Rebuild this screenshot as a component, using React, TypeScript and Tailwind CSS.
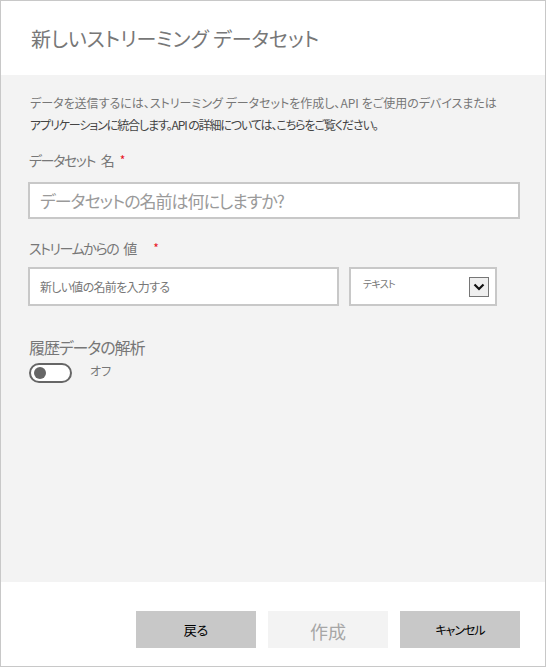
import React from "react";

export default function App() {
  const font = { fontFamily: '"Noto Sans CJK JP", "Noto Sans", sans-serif' };
  return (
    <div
      className="w-[546px] h-[667px] border border-[#c8c8c8] bg-white flex flex-col box-border [font-feature-settings:'palt']"
      style={font}
    >
      <div className="h-[74px] shrink-0 px-[30px] pt-[24px]">
        <h1 className="text-[20px] leading-[28px] text-[#777777] font-normal whitespace-nowrap">
          新しいストリーミング データセット
        </h1>
      </div>
      <div className="flex-1 bg-[#f3f3f3] px-[27px] pt-[17px] flex flex-col">
        <p className="text-[12px] leading-[22px] pl-[2px] whitespace-nowrap">
          <span className="text-[#777777]">
            データを送信するには、ストリーミング データセットを作成し、API をご使用のデバイスまたは
          </span>
          <br />
          <span className="text-[#444444] tracking-[-1.1px]">
            アプリケーションに統合します。API の詳細については、こちらをご覧ください。
          </span>
        </p>
        <div className="mt-[14px] text-[14px] leading-[20px] text-[#777777] pl-[1px] whitespace-nowrap flex items-center">
          <span className="tracking-[-1.4px]">データセット</span>
          <span className="ml-[6px]">名</span>
          <span className="text-[#e81123] text-[12px] ml-[5px]">*</span>
        </div>
        <div className="mt-[12px] h-[37px] w-[492px] bg-white border-2 border-[#c8c8c8] flex items-center px-[10px]">
          <span className="text-[17px] tracking-[-1px] text-[#9a9a9a] leading-none whitespace-nowrap">
            データセットの名前は何にしますか?
          </span>
        </div>
        <div className="mt-[19px] text-[14px] leading-[20px] text-[#777777] pl-[1px] whitespace-nowrap flex items-center">
          <span className="tracking-[-1.4px]">ストリームからの</span>
          <span className="ml-[5px]">値</span>
          <span className="text-[#e81123] text-[12px] ml-[16px]">*</span>
        </div>
        <div className="mt-[9px] flex gap-[10px]">
          <div className="h-[39px] w-[311px] bg-white border-2 border-[#c8c8c8] flex items-center px-[10px]">
            <span className="text-[12px] tracking-[-0.7px] text-[#777777] whitespace-nowrap">新しい値の名前を入力する</span>
          </div>
          <div className="h-[39px] w-[148px] bg-white border-2 border-[#c8c8c8] flex items-center justify-between pl-[12px] pr-[6px]">
            <span className="text-[10px] tracking-[-0.7px] text-[#777777] -mt-[6px] whitespace-nowrap">テキスト</span>
            <div className="w-[20px] h-[20px] border border-[#767676] bg-[#efefef] flex items-center justify-center">
              <svg width="12" height="8" viewBox="0 0 12 8">
                <path d="M1.5 1.5 L6 6 L10.5 1.5" fill="none" stroke="#111" strokeWidth="2.2" />
              </svg>
            </div>
          </div>
        </div>
        <div className="mt-[30px] text-[16px] leading-[22px] text-[#777777] pl-[1px] whitespace-nowrap tracking-[-1.1px]">
          履歴データの解析
        </div>
        <div className="mt-[5px] flex items-center pl-[1px]">
          <div className="w-[43px] h-[20px] rounded-full border-2 border-[#666666] bg-white flex items-center pl-[3px]">
            <div className="w-[12px] h-[12px] rounded-full bg-[#666666]" />
          </div>
          <span className="ml-[18px] text-[12px] text-[#777777] -mt-[4px]">オフ</span>
        </div>
      </div>
      <div className="h-[84px] shrink-0 flex justify-end items-start pt-[29px] pr-[25px] gap-[12px]">
        <button className="w-[120px] h-[37px] bg-[#c8c8c8] text-[13px] text-black">戻る</button>
        <button className="w-[120px] h-[37px] bg-[#f3f3f3] text-[18px] text-[#a6a6a6] pt-[4px]">作成</button>
        <button className="w-[120px] h-[37px] bg-[#c8c8c8] text-[12px] tracking-[-1px] text-black">キャンセル</button>
      </div>
    </div>
  );
}
